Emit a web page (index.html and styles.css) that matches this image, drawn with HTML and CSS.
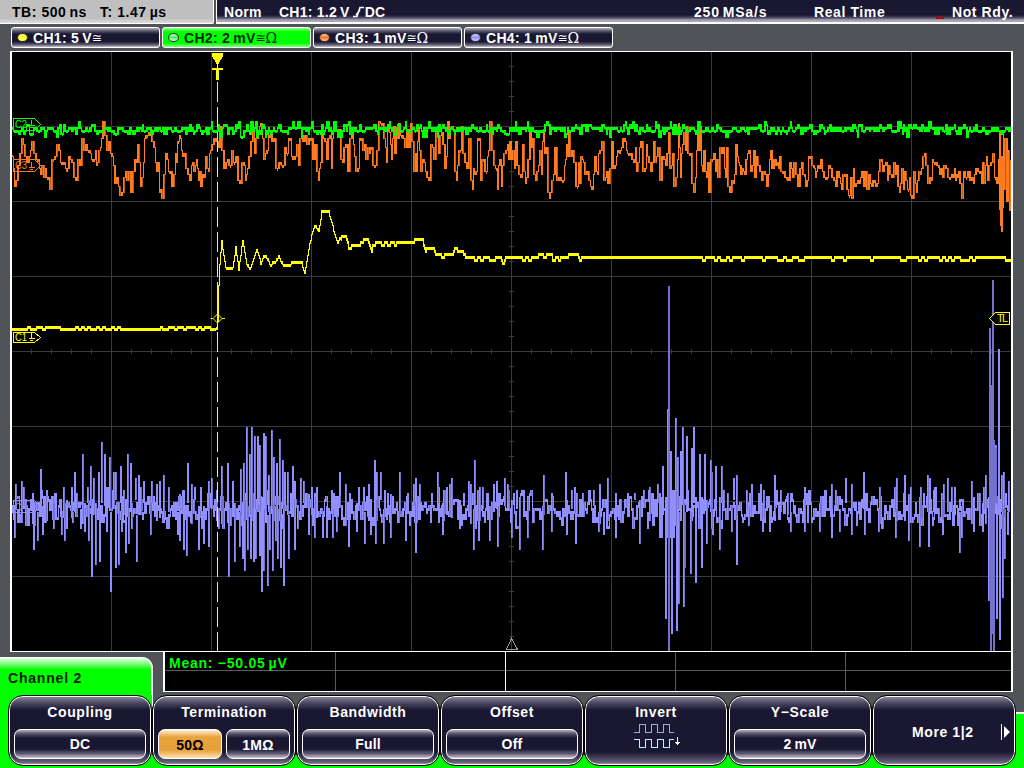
FILE: index.html
```html
<!DOCTYPE html>
<html lang="en">
<head>
<meta charset="utf-8">
<title>Oscilloscope</title>
<link rel="stylesheet" href="styles.css">
</head>
<body>
<div class="scope">
  <header class="topbar">
    <div class="timebase"><span class="tb">TB: 500<i></i>ns</span><span>T: 1.47<i></i>µs</span></div>
    <div class="status">
      <span class="mode">Norm</span>
      <span class="trig">CH1: 1.2<i></i>V<svg class="edge" width="13" height="12" viewBox="0 0 13 12"><path d="M1 10.5H5L8 1.5H12M4 9L8 4"/></svg>DC</span>
      <span class="rate">250<i></i>MSa/s</span>
      <span class="acq">Real&nbsp;Time</span>
      <span class="ready"><b class="led"></b>Not Rdy.</span>
    </div>
  </header>
  <nav class="channels">
    <div class="chip"><b class="dot yellow"></b>CH1: 5<i></i>V<span class="sym">≅</span></div>
    <div class="chip active"><b class="dot green"></b>CH2: 2<i></i>mV<span class="sym">≅<em>Ω</em></span></div>
    <div class="chip"><b class="dot orange"></b>CH3: 1<i></i>mV<span class="sym">≅<em>Ω</em></span></div>
    <div class="chip"><b class="dot violet"></b>CH4: 1<i></i>mV<span class="sym">≅<em>Ω</em></span></div>
  </nav>
  <main class="plot">
    <svg width="1003" height="601" viewBox="10 51 1003 601" shape-rendering="crispEdges">
      <rect x="10" y="51" width="1003" height="601" fill="#000"/>
      <path id="grid" class="grid"/>
      <path id="grey-marker" d="M511.5 638.5L506.5 649.5H517.5Z" fill="none" stroke="#999"/>
      <path id="ch4" fill="#918fff"/>
      <path id="ch4dark" fill="#7472cc"/>
      <path id="ch3" fill="#ff7a1e"/>
      <path id="ch3dark" fill="#c65b14"/>
      <path id="ch2" fill="#00ff00"/>
      <path id="ch1" fill="#ffff00"/>
      <path d="M217.5 82V651" stroke="#ff0" stroke-dasharray="20 5"/>
      <path d="M212 53H223V56L218.500 64H216.500L212 56Z" fill="#ff0"/>
      <path d="M217 64h1v4h5v2h-4v10h-3v-10h-4v-2h5z" fill="#ff0"/>
      <path d="M210.500 318.500H213L217.500 314L222 318.500H225M213 318.500L217.500 323L222 318.500" fill="none" stroke="#ff0" shape-rendering="auto"/>
      <g class="tags">
        <g stroke="#00ff00"><path d="M13.500 118.500H34.500L40.500 124.500L34.500 130.500H13.500Z"/><text x="15" y="128" fill="#00ff00" textLength="12" lengthAdjust="spacingAndGlyphs">C2</text><path d="M31.500 120V125M29 125.500H35M30 127.500H33"/></g>
        <g stroke="#ff7a1e"><path d="M13.500 159.500H34.500L40.500 165.500L34.500 171.500H13.500Z"/><text x="15" y="169" fill="#ff7a1e" textLength="12" lengthAdjust="spacingAndGlyphs">C3</text><path d="M31.500 162V167M29 167.500H35M30 169.500H33"/></g>
        <g stroke="#ffff00"><path d="M13.500 332.500H34.500L40.500 337.500L34.500 342.500H13.500Z"/><text x="15" y="341" fill="#ffff00" textLength="12" lengthAdjust="spacingAndGlyphs">C1</text><path d="M31.500 333V338M29 338.500H35M30 340.500H33"/></g>
        <g stroke="#918fff"><path d="M13.500 500.500H34.500L40.500 506.500L34.500 512.500H13.500Z"/><text x="15" y="511" fill="#918fff" textLength="12" lengthAdjust="spacingAndGlyphs">C4</text><path d="M31.500 503V508M29 508.500H35M30 510.500H33"/></g>
        <g stroke="#ffff00"><path d="M1009.500 312.500V324.500H995.500L989.500 318.500L995.500 312.500Z" class="solid"/><text x="997" y="322" fill="#ffff00" textLength="11">TL</text></g>
      </g>
      <path d="M10 51.500H1013M10 651.500H1013" stroke="#fff"/>
      <path d="M11 51V652M1012 51V652" stroke="#fff" stroke-width="2"/>
    </svg>
  </main>
  <footer class="bottom">
    <div class="info">
      <div class="tab">Channel 2</div>
      <div class="stats">
        <div class="cell mean">Mean: <span>−</span>50.05<i></i>µV</div><div class="cell mid"></div><div class="cell"></div><div class="cell"></div><div class="cell end"></div>
        <div class="cell low"></div><div class="cell low mid"></div><div class="cell low"></div><div class="cell low"></div><div class="cell low end"></div>
      </div>
    </div>
    <div class="menu">
      <div class="key"><div class="name">Coupling</div><div class="value">DC</div></div>
      <div class="key"><div class="name">Termination</div><div class="pair"><div class="value on">50Ω</div><div class="value">1MΩ</div></div></div>
      <div class="key"><div class="name">Bandwidth</div><div class="value">Full</div></div>
      <div class="key"><div class="name">Offset</div><div class="value">Off</div></div>
      <div class="key"><div class="name">Invert</div>
        <svg class="invert" width="48" height="28" viewBox="0 0 48 28" shape-rendering="crispEdges" fill="none">
          <path d="M0 11.500H5.500V3.500H11.500V11.500H17.500V3.500H23.500V11.500H29.500V3.500H35.500V11.500H40" stroke="#9eabd2"/>
          <path d="M0 18.500H5.500V26.500H11.500V18.500H17.500V26.500H23.500V18.500H29.500V26.500H35.500V18.500H40" stroke="#b5f3ff"/>
          <path d="M43.500 16V24M41 21.500H46M42 22.500H45" stroke="#fff"/>
        </svg>
      </div>
      <div class="key"><div class="name">Y−Scale</div><div class="value">2<i></i>mV</div></div>
      <div class="key more"><span>More 1|2</span><svg width="10" height="16" viewBox="0 0 10 16"><path d="M.5 0V16" stroke="#fff"/><path d="M3 2L9 8L3 14Z" fill="#fff"/></svg></div>
    </div>
  </footer>
</div>
<script src="traces.js"></script>
</body>
</html>
```
FILE: styles.css
```css
* { box-sizing: border-box; }
body { margin: 0; background: #505358; }
.scope {
  width: 1024px; height: 768px; overflow: hidden;
  display: flex; flex-direction: column;
  background: #505358; color: #fff;
  font: bold 14px/16px "Liberation Sans", Arial, sans-serif;
  letter-spacing: .6px; white-space: nowrap;
}
i { display: inline-block; width: 3px; }
.topbar { height: 24px; display: flex; gap: 2px; }
.timebase {
  width: 214px; padding: 4px 0 0 12px; display: flex;
  background: linear-gradient(#c0c0c0 80%, #ddd); color: #000;
  border-right: 1px solid #fff; border-bottom: 1px solid #fff; border-bottom-right-radius: 2px;
}
.timebase .tb { width: 88px; }
.timebase { letter-spacing: .55px; }
.channels { letter-spacing: .3px; }
.status {
  flex: 1; padding: 4px 0 0 7px; display: grid;
  grid-template-columns: 55px 415px 120px 123px 1fr;
  background: linear-gradient(#1a1733 68%, #4b4861 80%, #aaa8b8 92%);
  border-left: 1px solid #fff; border-bottom: 2px solid #fff;
}
.mode { letter-spacing: .3px; }
.trig { letter-spacing: .25px; }
.rate { letter-spacing: .8px; }
.edge { margin: 0 0 -1px 2px; fill: none; stroke: #fff; stroke-width: 1.6; }
.led { display: inline-block; width: 8px; height: 2px; margin: 0 8px -2px -1px; background: #c00000; }
.channels { height: 27px; padding: 3px 0 0 11px; display: flex; gap: 2px; }
.chip {
  width: 149px; height: 21px; padding: 0 0 0 5px;
  display: flex; align-items: center;
  border: 1px solid #fff; border-radius: 3px;
  background: linear-gradient(#b7b5c2 0, #5b586f 15%, #1a1733 32%, #1a1733 72%, #6b697d 90%, #c9c8d0);
}
.chip.active { color: #002800; background: linear-gradient(#9f9 0, #0f0 20%, #0f0 80%, #8f8); }
.dot { width: 11px; height: 9px; margin-right: 5px; border: 1px solid #333; border-radius: 50%; }
.yellow { background: linear-gradient(#ffb, #ff0 40%, #ff8); }
.green { background: linear-gradient(#cfc, #4e6 50%, #dfd); }
.orange { background: linear-gradient(#ffd0a8, #ff7020 50%, #ffc8a0); }
.violet { background: linear-gradient(#d6d6ff, #8f8fff 50%, #ccf); }
.sym { display: flex; align-items: center; font: 12px/14px "DejaVu Sans", sans-serif; letter-spacing: 0; }
.sym em { font: 14px/14px "DejaVu Serif", serif; }
.plot { height: 601px; margin-left: 10px; }
.plot svg { display: block; }
.grid { stroke: #3a3a3a; fill: none; }
.tags path { fill: none; }
.tags .solid { fill: #000; }
.tags text { font: 11px "Liberation Sans", sans-serif; letter-spacing: 0; stroke: none; }
.bottom { height: 116px; display: flex; flex-direction: column; }
.info { height: 43px; display: flex; gap: 10px; align-items: flex-start; }
.tab {
  width: 153px; height: 50px; margin-top: 5px; padding: 13px 0 0 8px; letter-spacing: .8px;
  color: #002000; border-top-right-radius: 11px; border-right: 2px solid #fff;
  background: linear-gradient(#fff 0, #b6ffb6 4px, #0f0 13px);
}
.stats {
  width: 850px; height: 40px; background: #000;
  border-left: 2px solid #fff; border-right: 2px solid #fff; border-bottom: 1px solid #fff;
  display: grid; grid-template-columns: 171px 170px 170px 170px 165px; grid-template-rows: 19px 20px;
}
.cell { border-right: 1px solid #5a5a5a; border-bottom: 1px solid #5a5a5a; }
.cell.mid { border-right-color: #fff; }
.cell.low { border-bottom: 0; }
.cell.end { border-right: 0; }
.mean { color: #0f0; padding: 3px 0 0 4px; letter-spacing: .75px; }
.menu {
  height: 73px; padding-left: 8px; display: flex; position: relative;
  background:
    linear-gradient(#0f0, #0f0) 0 0 / 152px 100% no-repeat,
    linear-gradient(#fff 2px, #0f0 2px) 1016px 17px / 8px 100% no-repeat,
    linear-gradient(#000, #000) 152px 12px / 850px 48px no-repeat,
    linear-gradient(#0f0, #0f0) 0 59px / 100% 14px no-repeat;
}
.key {
  width: 144px; height: 71px; padding: 8px 4px 0; text-align: center;
  border: 1px solid #000; border-radius: 15px;
  box-shadow: inset 0 0 0 1px #fff;
  background: linear-gradient(#8e8b9f 0, #4b4862 7px, #1a1733 14px, #1a1733 56px, #625f75 66px, #aaa8b5 100%);
}
.name { height: 25px; }
.value {
  height: 30px; padding-top: 6px; border: 1px solid #fff; border-radius: 7px;
  margin: 0 1px; letter-spacing: .2px;
  background: linear-gradient(#b6b4c0 0, #4f4c64 4px, #1a1733 8px, #1a1733 19px, #66637a 24px, #cccbd3);
}
.pair { display: flex; gap: 2px; }
.pair .value { flex: 1; padding-top: 7px; }
.value.on { color: #000; background: linear-gradient(#fff0d8 0, #e8a33c 7px, #e5a13b 20px, #ffe2b4); }
.invert { display: block; margin: -8px 0 0 45px; }
.key.more { display: flex; padding: 3px 4px 0 39px; align-items: center; justify-content: space-between; letter-spacing: .6px; }
```
FILE: traces.js
```js
// Fixed-seed noise keeps the traces identical on every load.
let seed = 77123;
function rnd() {
  seed = (seed * 48271) % 2147483647;
  return seed / 2147483647;
}
const put = (id, d) => document.getElementById(id).setAttribute('d', d);
const bar = (x, a, b, w) => `M${x} ${a}h${w}V${b}h${-w}Z`;
const pairs = s => s.trim().split(/\s+/).map(p => p.split(',').map(Number));

// Graticule
let g = '';
for (let x = 111; x < 1000; x += 100) g += `M${x + .5} 52V651`;
for (let y = 126; y < 640; y += 75) g += `M12 ${y + .5}H1011`;
for (let x = 31; x < 1011; x += 20) g += `M${x + .5} 349V354`;
for (let y = 66; y < 651; y += 15) g += `M509 ${y + .5}H514`;
put('grid', g);

// Sampled trace drawn as column bars snapped to three-pixel levels
function level(pts, x) {
  let i = 1;
  while (i < pts.length - 1 && pts[i][0] < x) i++;
  const [x0, y0] = pts[i - 1], [x1, y1] = pts[i];
  const t = Math.max(0, Math.min(1, (x - x0) / (x1 - x0)));
  return y0 + (y1 - y0) * t;
}

// Channel 2
let d2 = '', p = 127;
for (let x = 12; x < 1010;) {
  const w = rnd() > .45 ? 1 : 2;
  const r = rnd();
  let y = 124 + Math.floor((rnd() + rnd()) * 2) * 3;
  if (r > .97) y = 136;
  else if (r < .03) y = 121;
  d2 += bar(x, Math.min(y, p), Math.max(y, p) + (y === p ? 3 : 2), w);
  p = y;
  x += w;
}
put('ch2', d2);

// Channel 3
const orange = pairs(`12,152 14,176 18,160 22,136 24,165 30,142 33,152 38,160 42,170 46,168 49,180 53,160
57,145 60,162 66,160 70,166 74,176 79,160 82,138 84,158 87,136 90,158 96,160 102,130 107,144 112,158
115,180 119,197 124,164 130,182 134,160 137,150 139,195 143,155 146,135 152,139 157,170 160,195 165,165
169,170 172,182 177,148 180,133 184,160 189,180 195,163 200,177 205,165 210,156 213,145 219,134 221,155
225,160 230,160 237,173 244,172 248,150 254,145 259,125 263,155 268,128 272,135 277,168 283,166 288,140
294,164 300,145 307,135 312,148 318,175 323,132 326,150 329,134 331,164 333,140 337,130 342,150 347,160
350,135 356,155 361,135 366,152 372,165 376,140 382,122 385,145 395,135 402,145 406,126 410,138 413,174
418,145 421,160 426,178 431,160 434,130 440,140 443,160 448,125 452,140 456,165 460,135 466,150 472,170
478,152 483,175 489,135 493,160 497,175 502,178 506,145 512,155 519,160 526,165 529,142 535,165 541,155
543,135 548,184 554,160 562,165 566,135 570,160 575,182 582,155 588,175 592,180 596,160 600,142 605,184
612,155 617,150 622,145 627,170 633,160 640,155 645,150 648,165 655,150 661,170 668,144 672,170 676,178
678,130 680,180 684,128 689,150 693,180 697,140 701,150 706,185 713,145 718,165 724,155 730,188 736,155
742,175 750,160 760,170 763,180 770,165 780,170 790,174 800,170 805,182 808,165 820,165 830,168 840,180
850,186 858,170 868,186 875,175 885,168 895,175 908,186 915,182 922,160 928,175 938,165 947,184 955,172
962,186 968,165 974,175 984,170 992,165 996,178 999,160 1000,130 1002,222 1004,140 1006,200 1007,160 1009,160 1011,208`);
let d3 = '', d3d = '';
p = 155;
for (let x = 12; x < 1010;) {
  const w = rnd() > .5 ? 1 : 2;
  const amp = x < 230 ? 22 : x < 340 ? 30 : x < 740 ? 38 : 28;
  const y = Math.max(121, Math.round((level(orange, x) + (rnd() - .5) * amp) / 3) * 3);
  const lo = Math.min(y, p), hi = Math.max(y, p);
  d3 += bar(x, lo, hi + (y === p ? 3 : 1), w);
  if (w === 2 && hi - lo > 6 && rnd() > .4) d3d += bar(x + 1, lo, hi + 1, 1);
  p = y;
  x += w;
}
d3 += bar(999, 133, 210, 2) + bar(1000, 160, 226, 2) + bar(1001, 185, 232, 2) + bar(1003, 133, 208, 1) + bar(1009, 160, 211, 2);
put('ch3', d3);
put('ch3dark', d3d);

// Channel 1
const yellow = pairs(`12,328 216,328 217,322 218,285 219,265 221,241 223,255 225,268 229,266 232,268 235,247
238,270 242,239 246,264 250,267 252,262 256,248 260,263 264,254 269,263 273,262 278,256 283,265 287,260
295,262 300,261 304,274 308,250 311,233 314,224 318,231 321,211 328,211 333,230 337,242 341,234 345,234
349,244 357,244 363,238 367,237 371,245 377,239 388,240 395,242 399,239 410,240 417,237 421,236 425,245
432,245 436,250 443,253 448,249 455,247 462,249 466,256 471,254 485,254 497,254 503,257 510,254 523,254
529,257 536,254 545,251 553,254 558,257 564,254 576,252 581,256 1011,256`);
let d1 = '';
p = 327;
let shift = 0;
for (let x = 12; x < 1011; x++) {
  const flat = x < 216 || x > 340;
  if (x % 3 === 0) shift = rnd();
  let y = Math.round(level(yellow, x) / 3) * 3;
  if (x < 216) y = (x > 122 && x < 160) ? 327 : (shift > .5 ? 327 : 325);
  if (x > 284 && x < 302) y = shift > .5 ? 261 : 264;
  if (x > 340 && x < 581 && shift > .82) y += 3;
  if (x > 690 && shift > .72) y = 258;
  if (flat) d1 += bar(x, Math.min(y, p) + 1, Math.max(y, p) + 4, 1);
  else d1 += bar(x, Math.min(y, p), Math.max(y, p) + (y === p ? 3 : 1), 1);
  p = y;
}
put('ch1', d1 + bar(217, 285, 330, 1));

// Channel 4: peak positions above and below the noise floor
const up = pairs(`16,484 22,481 24,487 33,493 41,469 47,490 64,487 72,487 75,472 77,493 83,454 88,487 91,466
94,478 99,472 102,442 105,454 110,457 114,472 116,472 121,466 124,490 128,454 131,463 136,478 139,475
141,487 144,481 152,481 157,484 160,481 164,475 169,487 179,496 182,496 188,463 192,484 195,487 201,487
209,481 212,478 217,490 222,466 228,463 233,481 241,469 244,463 247,427 250,454 252,427 255,436 258,436
260,445 264,433 266,436 269,475 272,430 274,457 277,463 280,439 283,460 285,472 288,472 293,466 295,481
301,478 304,481 312,487 317,487 332,490 340,472 346,484 350,493 359,487 364,487 369,484 375,460 377,472
381,472 385,490 388,493 400,472 408,493 414,484 416,478 420,484 438,472 439,487 444,490 447,487 450,484
452,478 464,493 469,481 471,484 475,460 478,490 480,487 483,487 494,484 497,481 505,478 508,484 517,490
528,496 544,475 552,493 566,472 572,490 575,487 583,493 594,490 600,484 608,478 616,493 628,493 635,493
644,490 650,487 658,484 663,466 668,409 671,451 676,418 678,457 683,427 681,451 687,436 692,448 694,427
700,454 705,454 711,460 712,472 716,466 722,466 728,493 734,478 737,475 747,490 752,484 761,484 764,490
775,475 781,490 788,493 805,487 832,484 836,490 846,478 852,484 864,472 880,487 895,487 897,478 905,475
911,487 921,487 928,475 930,478 934,490 942,493 944,484 948,478 952,487 955,487 972,481 984,487 986,475
990,328 995,448 996,445 999,349 1002,475 1004,472 1009,481`);
const down = pairs(`15,538 18,523 22,523 26,526 34,550 38,541 43,535 54,529 62,535 65,541 67,529 73,523 81,529
85,532 89,541 92,577 96,565 100,562 107,532 111,592 116,568 119,565 122,532 126,553 129,544 132,529
137,562 143,520 151,535 178,535 180,541 184,550 187,556 199,550 204,544 209,547 219,529 229,577 235,562
240,547 243,559 245,571 248,550 251,559 254,562 256,559 260,556 262,592 264,571 268,586 270,550 273,571
276,541 278,559 281,568 284,586 289,559 295,550 298,529 309,535 315,538 323,538 327,538 333,538 337,532
349,547 357,532 365,544 371,535 376,544 384,544 391,538 406,541 416,553 443,535 460,529 474,550 479,541
490,541 498,547 512,538 520,550 528,538 543,550 552,532 567,535 576,544 599,532 604,535 616,538 640,544
648,529 660,538 662,538 666,619 672,634 677,631 679,604 684,607 685,568 691,574 696,583 702,568 707,544
713,535 720,550 732,532 737,565 749,526 763,532 770,532 791,532 805,532 820,532 832,538 840,532 852,535
865,535 879,532 896,538 909,541 920,547 929,547 943,535 960,553 962,538 974,532 983,532 989,601 997,619
1000,640 1003,598 1005,559 1008,535`);
let d4 = '', d4d = '';
let q = 510;
for (let x = 12; x < 1010;) {
  const w = rnd() > .5 ? 1 : 2;
  const y = 487 + Math.round((rnd() + rnd()) * 7) * 3;
  const lo = Math.min(y, q), hi = Math.max(y, q) + 3;
  d4 += bar(x, lo, hi, w);
  if (w === 2 && rnd() > .6) d4d += bar(x + 1, lo, hi, 1);
  q = y;
  x += w;
}
for (const [x, y] of up) {
  const end = 500 + Math.round(rnd() * 8) * 3;
  d4 += bar(x - 1, y, end, 2);
  if (rnd() > .4) d4d += bar(x, y, end, 1);
}
for (const [x, y] of down) {
  const start = 494 + Math.round(rnd() * 7) * 3;
  d4 += bar(x - 1, start, y, 2);
  if (rnd() > .4) d4d += bar(x, start, y, 1);
}
d4 += bar(667, 490, 538, 8);
d4d += bar(668, 286, 651, 2) + bar(989, 328, 601, 2) + bar(990, 385, 651, 2) + bar(992, 280, 634, 2) + bar(993, 440, 651, 2);
put('ch4', d4);
put('ch4dark', d4d);
```
